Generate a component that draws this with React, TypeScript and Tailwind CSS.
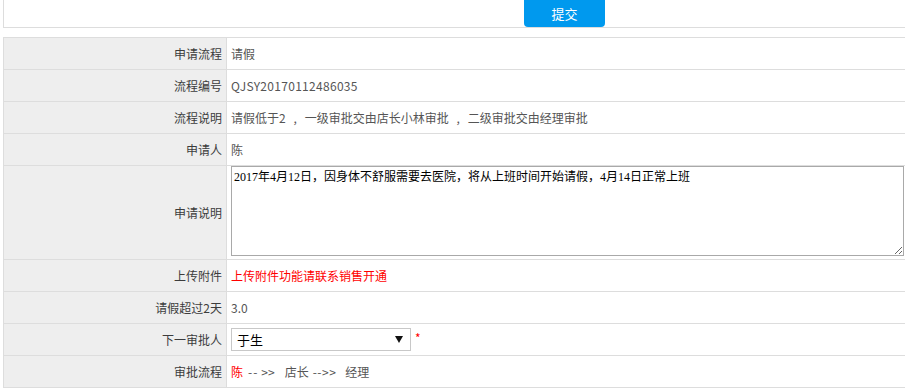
const Comma = () => <span className="inline-block w-[19px] text-center">,</span>;

const rows: { label: string; value: React.ReactNode }[] = [
  { label: "申请流程", value: "请假" },
  { label: "流程编号", value: <span className="tracking-[0.3px]">QJSY20170112486035</span> },
  {
    label: "流程说明",
    value: (
      <span>
        请假低于2<Comma />一级审批交由店长小林审批<Comma />二级审批交由经理审批
      </span>
    ),
  },
  { label: "申请人", value: "陈" },
];

const after: { label: string; value: React.ReactNode }[] = [
  {
    label: "上传附件",
    value: <span className="text-[#ff0000]">上传附件功能请联系销售开通</span>,
  },
  { label: "请假超过2天", value: "3.0" },
  {
    label: "下一审批人",
    value: (
      <div className="flex items-start">
        <div className="flex h-[23px] w-[180px] items-center justify-between border border-[#c8c8c8] bg-white pl-[5px] pr-[7px] text-[13px] text-black">
          <span>于生</span>
          <svg width="8" height="7" viewBox="0 0 8 7">
            <path d="M0 0 L8 0 L4 7 Z" fill="#111" />
          </svg>
        </div>
        <span className="ml-[4px] mt-[1px] text-[12px] text-[#ff0000]">*</span>
      </div>
    ),
  },
  {
    label: "审批流程",
    value: (
      <span className="flex items-center">
        <span className="text-[#ff0000]">陈</span>
        <span className="ml-[5px] tracking-[1px]">--</span>
        <span className="ml-[3px]">&gt;&gt;</span>
        <span className="ml-[10px]">店长</span>
        <span className="ml-[4px] tracking-[0.5px]">--&gt;&gt;</span>
        <span className="ml-[9px]">经理</span>
      </span>
    ),
  },
];

function Row({ label, value }: { label: string; value: React.ReactNode }) {
  return (
    <div className="flex h-[32px] border-b border-[#dddddd]">
      <div className="flex w-[223px] shrink-0 items-center justify-end border-r border-[#dddddd] bg-[#eeeeee] pr-[4px] text-[#3c3c3c]">
        {label}
      </div>
      <div className="flex flex-1 items-center pl-[4px] text-[#555]">{value}</div>
    </div>
  );
}

export default function App() {
  return (
    <div
      className="h-[388px] w-[905px] overflow-hidden bg-white text-[12px]"
      style={{ fontFamily: '"Noto Sans CJK SC", "Noto Sans", sans-serif' }}
    >
      <div className="ml-[3px] w-[1123px]">
        {/* submit bar */}
        <div className="-mt-[8px] flex h-[36px] justify-center border border-[#dddddd]">
          <button className="h-[34px] w-[81px] rounded-[4px] bg-[#0099ee] pt-[7px] text-[13px] text-white">
            提交
          </button>
        </div>

        {/* form table */}
        <div className="mt-[9px] border-l border-t border-[#dddddd]">
          {rows.map((r) => (
            <Row key={r.label} {...r} />
          ))}
          <div className="flex h-[94px] border-b border-[#dddddd]">
            <div className="flex w-[223px] shrink-0 items-center justify-end border-r border-[#dddddd] bg-[#eeeeee] pr-[4px] text-[#3c3c3c]">
              申请说明
            </div>
            <div className="flex-1 pl-[4px]">
              <textarea
                className="block h-[90px] w-[673px] resize-y border border-[#a9a9a9] px-[2px] pt-[3px] text-[12px] leading-[15px] text-black outline-none"
                style={{ fontFamily: '"Liberation Serif", "Noto Sans CJK SC", serif' }}
                defaultValue="2017年4月12日，因身体不舒服需要去医院，将从上班时间开始请假，4月14日正常上班"
              />
            </div>
          </div>
          {after.map((r) => (
            <Row key={r.label} {...r} />
          ))}
        </div>
      </div>
    </div>
  );
}
